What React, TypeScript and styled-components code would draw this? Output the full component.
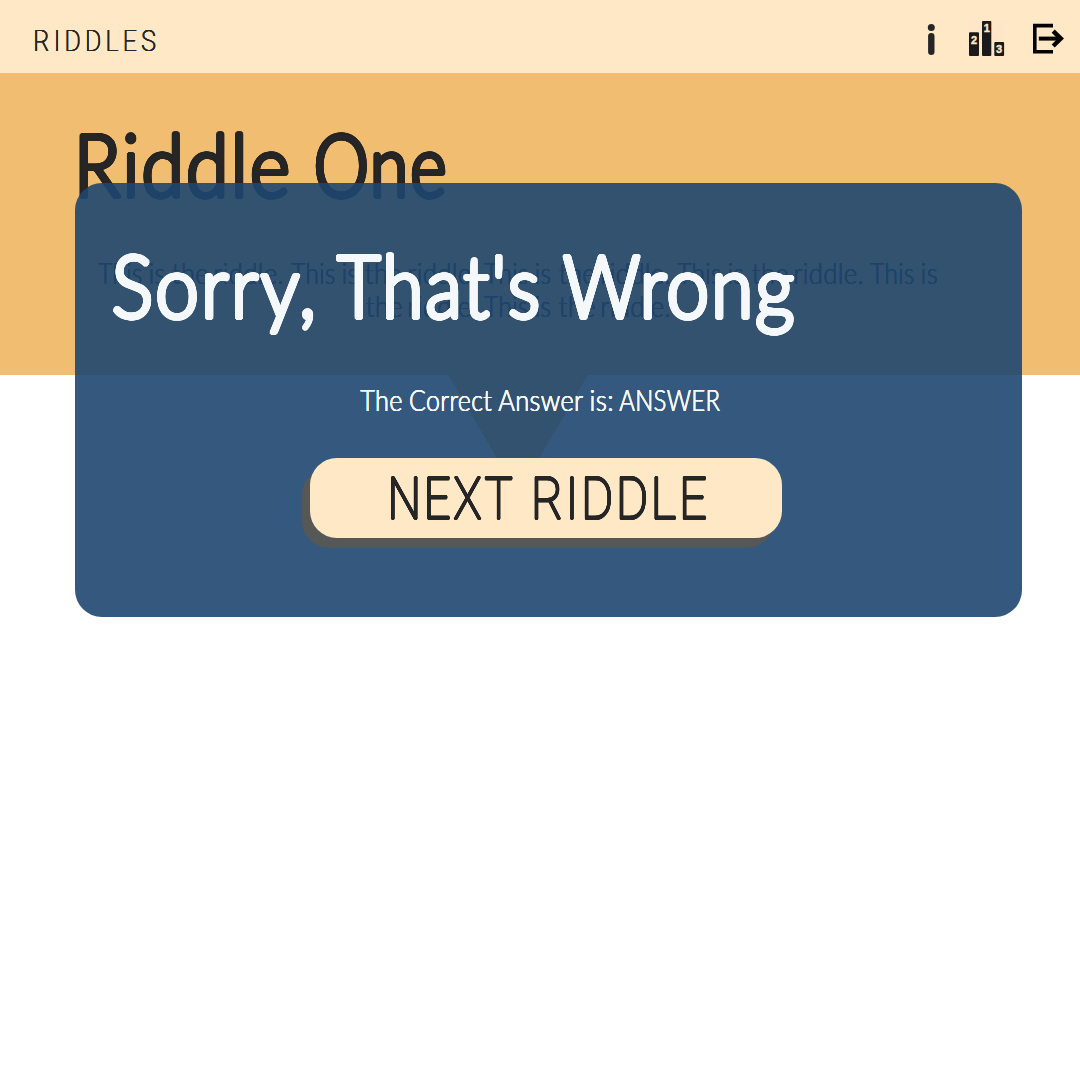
import React, { useMemo } from "react";
import styled, { createGlobalStyle } from "styled-components";

const INK = "#262626";
const CREAM = "#ffe8c6";
const SAND = "#f1bd71";
const SNOW = "#f5f8fa";

const GlobalStyle = createGlobalStyle`
  html, body { margin: 0; background: #fff; }
  body { width: 1080px; min-height: 1080px; overflow: hidden; font-family: Lato, "Open Sans", sans-serif; }
  *, *::before, *::after { box-sizing: border-box; }
`;

type Face = {
  family: string;
  weight: number;
  size: number;
  round: number;
  tracking?: number;
};

const FACES: Record<string, Face> = {
  brand: { family: "Roboto", weight: 200, size: 29, round: 0.3, tracking: 5 },
  display: { family: "Lato", weight: 300, size: 87.4, round: 2.05, tracking: 2.5 },
  body: { family: "Lato", weight: 300, size: 28.6, round: 0.22, tracking: 0.4 },
  action: { family: "Roboto", weight: 200, size: 59.5, round: 0.75, tracking: 3 },
};

/* Rounds off the stroke ends by thickening the letters evenly in all directions. */
function halo(radius: number, squeeze: number) {
  const steps = radius > 1 ? 24 : radius > 0.5 ? 12 : 4;
  return Array.from({ length: steps }, (_, i) => {
    const a = (i / steps) * Math.PI * 2;
    return `${((Math.cos(a) * radius) / squeeze).toFixed(2)}px ${(Math.sin(a) * radius).toFixed(2)}px 0 currentColor`;
  }).join(",");
}

const WordBox = styled.span`
  display: block;
  flex: none;
  white-space: nowrap;
`;

const WordInk = styled.span<{ $face: Face }>`
  display: inline-block;
  font-family: ${(p) => p.$face.family}, sans-serif;
  font-weight: ${(p) => p.$face.weight};
  font-size: ${(p) => p.$face.size}px;
  line-height: 1;
  letter-spacing: ${(p) => p.$face.tracking ?? 0}px;
  transform-origin: 0 0;
`;

function Word({ text, width, face }: { text: string; width: number; face: Face }) {
  const fit = useMemo(() => {
    const ctx = document.createElement("canvas").getContext("2d")!;
    ctx.font = `${face.weight} ${face.size * 10}px ${face.family}`;
    const m = ctx.measureText(text);
    const left = -m.actualBoundingBoxLeft / 10;
    const right = m.actualBoundingBoxRight / 10 + (face.tracking ?? 0) * (text.length - 1);
    const squeeze = (width - face.round * 2) / (right - left);
    return { squeeze, shift: face.round - left * squeeze };
  }, [text, width, face]);
  return (
    <WordBox style={{ width }}>
      <WordInk
        $face={face}
        style={{
          transform: `translateX(${fit.shift}px) scaleX(${fit.squeeze})`,
          textShadow: halo(face.round, fit.squeeze),
        }}
      >
        {text}
      </WordInk>
    </WordBox>
  );
}

type Fitted = [text: string, width: number, gap?: number];

const Line = styled.span<{ $height: number }>`
  display: flex;
  height: ${(p) => p.$height}px;
`;
const Gap = styled.span<{ $w: number }>`
  flex: none;
  width: ${(p) => p.$w}px;
  white-space: pre;
  overflow: hidden;
`;

function Words({ words, face, height }: { words: Fitted[]; face: Face; height: number }) {
  return (
    <Line $height={height}>
      {words.map(([text, width, gap], i) => (
        <React.Fragment key={i}>
          <Word text={text} width={width} face={face} />
          {gap ? <Gap $w={gap}> </Gap> : null}
        </React.Fragment>
      ))}
    </Line>
  );
}

const Header = styled.header`
  display: flex;
  justify-content: space-between;
  align-items: flex-start;
  height: 72.5px;
  padding: 0 16px 0 34.6px;
  background: ${CREAM};
  color: ${INK};
`;
const Brand = styled.div`
  padding-top: 26.6px;
`;
const Nav = styled.nav`
  display: flex;
  align-items: flex-start;
  padding-top: 20px;
  svg { display: block; }
`;
const IconButton = styled.a<{ $gap?: number }>`
  margin-left: ${(p) => p.$gap ?? 0}px;
`;

const Hero = styled.main`
  height: 302px;
  padding: 47.5px 0 0 79px;
  background: ${SAND};
  color: ${INK};
`;
const Title = styled.h1`
  margin: 0;
  font-size: inherit;
  font-weight: inherit;
`;
const Riddle = styled.p`
  display: flex;
  flex-direction: column;
  width: 842px;
  margin: 51px 0 0 18.8px;
  & > span + span { margin-left: 268px; }
`;
const Pointer = styled.div`
  width: 140px;
  height: 120px;
  margin-left: 448px;
  background: ${SAND};
  clip-path: polygon(0 0, 100% 0, 50% 100%);
`;

const Modal = styled.section`
  position: absolute;
  top: 183.3px;
  left: 74.5px;
  display: flex;
  flex-direction: column;
  width: 947.2px;
  height: 433.4px;
  border-radius: 27px;
  background: rgba(30, 70, 112, 0.9);
  color: ${SNOW};
`;
const ModalTitle = styled.h2`
  margin: 58px 0 0 37.3px;
  font-size: inherit;
  font-weight: inherit;
`;
const Answer = styled.p`
  margin: 57.9px 0 0 285.5px;
`;
const NextButton = styled.button`
  display: flex;
  width: 471.3px;
  height: 79.6px;
  margin: 42.5px 0 0 235.8px;
  padding: 11.8px 0 0 80.6px;
  border: 0;
  border-radius: 27px;
  background: ${CREAM};
  box-shadow: -8px 9.8px 0 #555856;
  color: ${INK};
`;

const SENTENCE: Fitted[] = [
  ["This", 43.6, 8.2],
  ["is", 14.2, 8.5],
  ["the", 35.8, 7.4],
  ["riddle.", 67.2, 8.3],
];
const FIRST_LINE: Fitted[] = [
  ...SENTENCE, ...SENTENCE, ...SENTENCE, ...SENTENCE,
  ["This", 43.6, 8.2], ["is", 15],
];
const SECOND_LINE: Fitted[] = [
  SENTENCE[2], SENTENCE[3], SENTENCE[0], SENTENCE[1], SENTENCE[2], ["riddle.", 67.2],
];

const InfoIcon = () => (
  <svg width="8" height="36" viewBox="0 0 8 36" fill={INK}>
    <circle cx="4.3" cy="7.6" r="3.5" />
    <rect x="1.1" y="13" width="6.4" height="22" rx="3.2" />
  </svg>
);
const PodiumIcon = () => (
  <svg width="37" height="37" viewBox="0 0 37 37" fill="#1a1a1a">
    <rect width="37" height="37" fill="#ffe6c8" />
    <rect x="1" y="12.3" width="10" height="23.7" rx="1" />
    <rect x="14" y="1" width="9.3" height="35" rx="1" />
    <rect x="26.3" y="22" width="9.8" height="14" rx="1" />
    <g
      fill={CREAM}
      stroke={CREAM}
      strokeWidth="0.4"
      fontFamily="Liberation Sans, sans-serif"
      fontWeight="700"
      fontSize="11"
      textAnchor="middle"
    >
      <text x="6" y="23.6">2</text>
      <text x="18.8" y="11.9">1</text>
      <text x="31.1" y="33">3</text>
    </g>
  </svg>
);
const ExitIcon = () => (
  <svg width="32" height="37" viewBox="0 0 32 37" fill="none" stroke="#000" strokeWidth="3.6">
    <path d="M21 5.6H2.8V31.8H21" />
    <path d="M6.8 18.6H28" strokeWidth="4" />
    <path d="M21.2 11.2L28.8 18.6L21.2 26" strokeWidth="4.4" />
  </svg>
);

export default function App() {
  return (
    <>
      <GlobalStyle />
      <Header>
        <Brand><Words words={[["RIDDLES", 120.4]]} face={FACES.brand} height={30} /></Brand>
        <Nav>
          <IconButton aria-label="Info"><InfoIcon /></IconButton>
          <IconButton aria-label="Leaderboard" $gap={32.8}><PodiumIcon /></IconButton>
          <IconButton aria-label="Sign out" $gap={27.2}><ExitIcon /></IconButton>
        </Nav>
      </Header>
      <Hero>
        <Title><Words words={[["Riddle", 210.2, 26], ["One", 131]]} face={FACES.display} height={88} /></Title>
        <Riddle>
          <Words words={FIRST_LINE} face={FACES.body} height={33.2} />
          <Words words={SECOND_LINE} face={FACES.body} height={33.2} />
        </Riddle>
      </Hero>
      <Pointer />
      <Modal>
        <ModalTitle>
          <Words words={[["Sorry,", 201.2, 22.3], ["That's", 204.3, 22.4], ["Wrong", 232.3]]} face={FACES.display} height={87} />
        </ModalTitle>
        <Answer>
          <Words
            words={[["The", 41.7, 8.3], ["Correct", 81.7, 6.6], ["Answer", 85, 7.4], ["is:", 21, 7.3], ["ANSWER", 101]]}
            face={FACES.body}
            height={29.5}
          />
        </Answer>
        <NextButton>
          <Words words={[["NEXT", 121.7, 21.2], ["RIDDLE", 172]]} face={FACES.action} height={60} />
        </NextButton>
      </Modal>
    </>
  );
}
